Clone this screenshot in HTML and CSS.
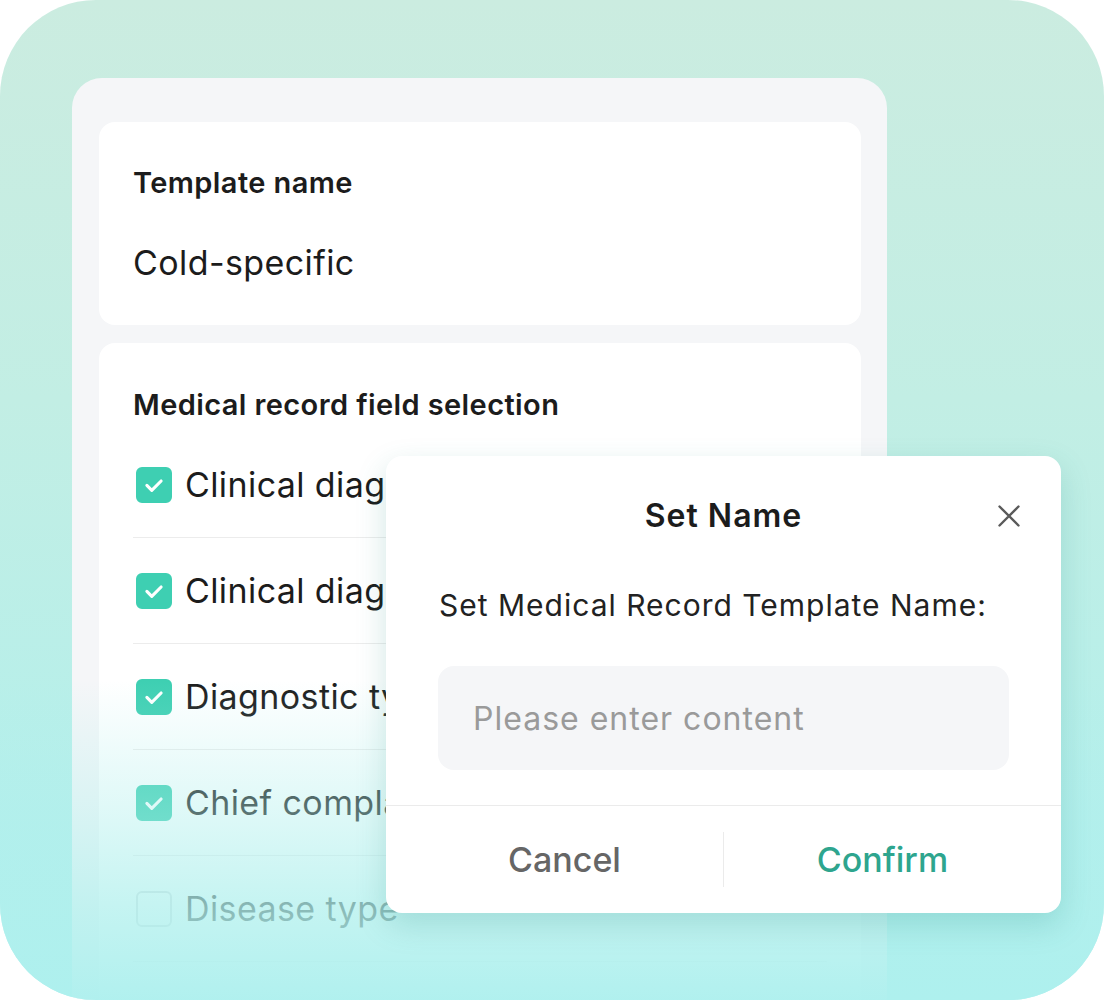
FILE: index.html
```html
<!DOCTYPE html>
<html lang="en">
  <head>
    <meta charset="UTF-8" />
    <meta name="viewport" content="width=device-width, initial-scale=1.0" />
    <title>Set Name</title>
    <link rel="stylesheet" href="styles.css">
  </head>
  <body>
    <div class="frame">
      <div class="phone">
        <section class="card card-name">
          <h2 class="card-title">Template name</h2>
          <p class="name-value">Cold-specific</p>
        </section>

        <section class="card card-fields">
          <h2 class="card-title">Medical record field selection</h2>
          <ul class="field-list">
            <li class="field-row">
              <span class="check checked"><svg viewBox="0 0 36 36"><path d="M10 18.5l5.5 5.5L26 13.5" /></svg></span>
              <span class="field-label">Clinical diagnosis</span>
            </li>
            <li class="field-row">
              <span class="check checked"><svg viewBox="0 0 36 36"><path d="M10 18.5l5.5 5.5L26 13.5" /></svg></span>
              <span class="field-label">Clinical diagnosis code</span>
            </li>
            <li class="field-row">
              <span class="check checked"><svg viewBox="0 0 36 36"><path d="M10 18.5l5.5 5.5L26 13.5" /></svg></span>
              <span class="field-label">Diagnostic type</span>
            </li>
            <li class="field-row">
              <span class="check checked"><svg viewBox="0 0 36 36"><path d="M10 18.5l5.5 5.5L26 13.5" /></svg></span>
              <span class="field-label">Chief complaint</span>
            </li>
            <li class="field-row">
              <span class="check"></span>
              <span class="field-label">Disease type</span>
            </li>
          </ul>
        </section>
      </div>

      <div class="fade"></div>

      <div class="dialog">
        <div class="dialog-head">
          <h3 class="dialog-title">Set Name</h3>
          <button class="dialog-close" aria-label="Close">
            <svg viewBox="0 0 22 22"><path d="M1.5 1.5l19 19M20.5 1.5l-19 19" /></svg>
          </button>
        </div>
        <p class="dialog-label">Set Medical Record Template Name:</p>
        <input class="dialog-input" type="text" placeholder="Please enter content" />
        <div class="dialog-foot">
          <button class="btn btn-cancel">Cancel</button>
          <button class="btn btn-confirm">Confirm</button>
        </div>
      </div>
    </div>
  </body>
</html>
```

FILE: styles.css
```css
* {
  box-sizing: border-box;
}

body {
  margin: 0;
  background-color: white;
  font-family: Inter, "Noto Sans", sans-serif;
  color: #1c1c1c;
}

.frame {
  position: relative;
  width: 1104px;
  height: 1000px;
  border-radius: 96px;
  overflow: hidden;
  background: linear-gradient(to bottom, #cbece0 0%, #c2eee4 40%, #aef0ee 100%);
  padding: 78px 0 0 72px;
}

.phone {
  width: 815px;
  height: 1000px;
  background-color: #f5f6f8;
  border-radius: 30px;
  padding: 44px 26px 0 27px;
}

.card {
  background-color: white;
  border-radius: 16px;
  padding: 0 34px;
}

.card-title {
  margin: 0;
  font-size: 29px;
  font-weight: 600;
  letter-spacing: 0.4px;
  line-height: 36px;
}

.card-name {
  padding-top: 43px;
  padding-bottom: 40px;
}

.name-value {
  margin: 40px 0 0;
  font-size: 34px;
  letter-spacing: 0.4px;
  line-height: 44px;
}

.card-fields {
  margin-top: 18px;
  padding-top: 44px;
  height: 700px;
}

.card-fields .card-title {
  margin-bottom: 9px;
}

.field-list {
  list-style: none;
  margin: 0;
  padding: 0;
}

.field-row {
  display: flex;
  align-items: center;
  gap: 13px;
  height: 106px;
  border-bottom: 1px solid #ececec;
  padding-left: 3px;
  white-space: nowrap;
}

.check {
  width: 36px;
  height: 36px;
  border-radius: 6px;
  border: 2px solid #d6d9dc;
  flex-shrink: 0;
}

.check.checked {
  background-color: #3ecfb2;
  border-color: #3ecfb2;
}

.check svg {
  display: block;
  width: 32px;
  height: 32px;
  fill: none;
  stroke: white;
  stroke-width: 3.5;
  stroke-linecap: round;
  stroke-linejoin: round;
}

.field-label {
  font-size: 34px;
  letter-spacing: 0.4px;
  line-height: 44px;
}

.fade {
  position: absolute;
  left: 0;
  right: 0;
  top: 680px;
  bottom: 0;
  background: linear-gradient(
    to bottom,
    rgba(176, 240, 237, 0) 0%,
    rgba(176, 240, 237, 0.4) 40%,
    rgba(176, 240, 237, 0.75) 72%,
    rgba(174, 240, 238, 0.97) 100%
  );
}

.dialog {
  position: absolute;
  left: 386px;
  top: 456px;
  width: 675px;
  height: 457px;
  background-color: white;
  border-radius: 16px;
  box-shadow: 0 12px 30px rgba(40, 140, 130, 0.22);
  padding-top: 40px;
}

.dialog-head {
  position: relative;
  height: 40px;
  text-align: center;
}

.dialog-title {
  margin: 0;
  font-size: 32px;
  font-weight: 600;
  letter-spacing: 1px;
  line-height: 40px;
}

.dialog-close {
  position: absolute;
  right: 41px;
  top: 9px;
  width: 22px;
  height: 22px;
  padding: 0;
  border: none;
  background: none;
}

.dialog-close svg {
  display: block;
  width: 22px;
  height: 22px;
  stroke: #5a5a5a;
  stroke-width: 2.4;
  stroke-linecap: round;
}

.dialog-label {
  margin: 49px 40px 0 53px;
  font-size: 30px;
  letter-spacing: 1px;
  line-height: 40px;
  color: #222;
  white-space: nowrap;
}

.dialog-input {
  display: block;
  margin: 41px 52px 0;
  width: 571px;
  height: 104px;
  border: none;
  border-radius: 16px;
  background-color: #f5f6f8;
  padding: 0 35px;
  font-family: inherit;
  font-size: 32px;
  letter-spacing: 1px;
  color: #222;
  outline: none;
}

.dialog-input::placeholder {
  color: #9a9a9a;
}

.dialog-foot {
  display: flex;
  align-items: center;
  margin-top: 35px;
  height: 108px;
  border-top: 1px solid #ebebeb;
}

.btn {
  flex: 1;
  height: 55px;
  border: none;
  background: none;
  font-family: inherit;
  font-size: 34px;
  font-weight: 500;
  cursor: pointer;
}

.btn-cancel {
  color: #666;
  border-right: 1px solid #ebebeb;
  padding-left: 26px;
}

.btn-confirm {
  color: #2ea58e;
  padding-right: 26px;
}
```
